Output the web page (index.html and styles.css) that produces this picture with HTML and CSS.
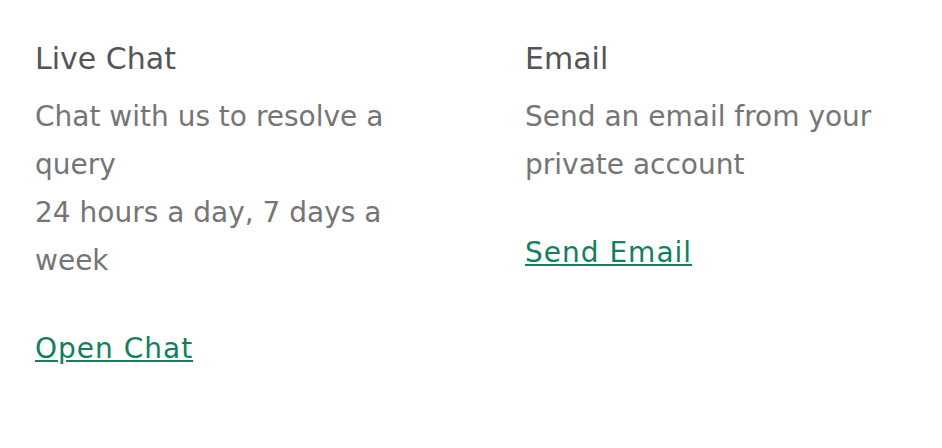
FILE: index.html
```html
<!DOCTYPE html>
<html lang="en">
<head>
<meta charset="utf-8">
<title>Contact</title>
<link rel="stylesheet" href="styles.css">
</head>
<body>
<div class="contact">
  <section class="option">
    <h2 class="option-title">Live Chat</h2>
    <p class="option-text">Chat with us to resolve a query<br>24 hours a day, 7 days a week</p>
    <a class="option-link" href="#">Open Chat</a>
  </section>
  <section class="option">
    <h2 class="option-title">Email</h2>
    <p class="option-text">Send an email from your private account</p>
    <a class="option-link" href="#">Send Email</a>
  </section>
</div>
</body>
</html>
```
FILE: styles.css
```css
html, body {
  margin: 0;
  padding: 0;
  background: #ffffff;
}
body {
  font-family: "DejaVu Sans", Verdana, sans-serif;
}
.contact {
  display: grid;
  grid-template-columns: 400px 1fr;
  column-gap: 90px;
  padding: 36px 20px 0 35px;
}
.option-title {
  margin: 0;
  font-size: 30px;
  font-weight: normal;
  line-height: 46px;
  color: #555555;
}
.option-text {
  margin: 11px 0 40px;
  font-size: 28px;
  line-height: 48px;
  color: #757575;
}
.option-link {
  font-size: 28px;
  line-height: 48px;
  letter-spacing: 1px;
  color: #12805c;
  text-decoration: underline;
}
```
